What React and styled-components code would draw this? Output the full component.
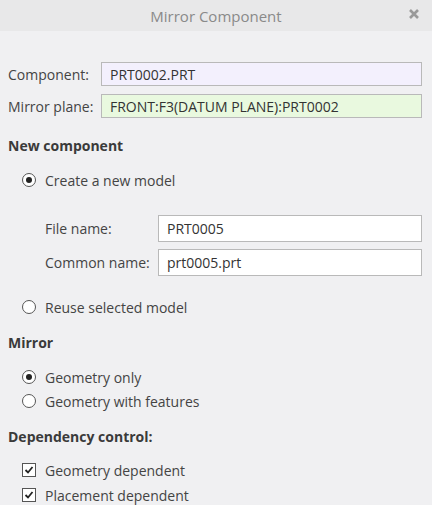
import React from "react";
import styled, { createGlobalStyle } from "styled-components";

const GlobalStyle = createGlobalStyle`
  body {
    margin: 0;
    background: #f0f0f2;
    font-family: "Open Sans", "Noto Sans", sans-serif;
  }
`;

const Dialog = styled.div`
  width: 432px;
  height: 505px;
  background: #f0f0f2;
  overflow: hidden;
  color: #444;
  font-size: 14px;
`;

const TitleBar = styled.div`
  height: 31px;
  background: #e8e8e9;
  display: flex;
  align-items: center;
  justify-content: center;
  position: relative;
  color: #8a8a8a;
  font-size: 15px;
`;

const CloseButton = styled.span`
  position: absolute;
  right: 12px;
  top: 8px;
  width: 12px;
  height: 12px;
  display: flex;
`;

const Body = styled.div`
  padding: 31px 10px 0 8px;
`;

const FieldGrid = styled.div`
  display: grid;
  grid-template-columns: ${(p) => p.labelWidth}px 1fr;
  row-gap: ${(p) => p.gap}px;
  align-items: center;
  margin-left: ${(p) => p.indent || 0}px;
  margin-top: ${(p) => p.top || 0}px;
`;

const Label = styled.div`
  color: #444;
  white-space: nowrap;
`;

const Field = styled.div`
  height: ${(p) => p.height}px;
  box-sizing: border-box;
  border: 1px solid #b9b9b9;
  background: ${(p) => p.bg || "#ffffff"};
  color: #333;
  display: flex;
  align-items: center;
  padding-left: 8px;
`;

const Heading = styled.div`
  font-weight: 700;
  color: #3a3a3a;
  font-size: 14px;
  margin-top: ${(p) => p.top}px;
`;

const OptionRow = styled.label`
  display: flex;
  align-items: center;
  gap: 9px;
  margin-left: 14px;
  height: 24px;
  margin-top: ${(p) => p.top || 0}px;
  color: #444;
`;

const Radio = styled.span`
  width: 14px;
  height: 14px;
  box-sizing: border-box;
  border-radius: 50%;
  border: 1px solid #555;
  background: #fff;
  display: flex;
  align-items: center;
  justify-content: center;
  &::after {
    content: "";
    width: 6px;
    height: 6px;
    border-radius: 50%;
    background: ${(p) => (p.checked ? "#222" : "transparent")};
  }
`;

const Check = styled.span`
  width: 14px;
  height: 14px;
  box-sizing: border-box;
  border: 1px solid #555;
  background: #fff;
  display: flex;
  align-items: center;
  justify-content: center;
`;

const CloseIcon = () => (
  <svg width="12" height="12" viewBox="0 0 12 12">
    <path d="M2 2 L10 10 M10 2 L2 10" stroke="#9a9a9a" strokeWidth="2.6" />
  </svg>
);

const CheckMark = () => (
  <svg width="10" height="10" viewBox="0 0 10 10">
    <path d="M1.5 5 L4 7.5 L8.5 2" fill="none" stroke="#222" strokeWidth="1.8" />
  </svg>
);

const App = () => {
  return (
    <Dialog>
      <GlobalStyle />
      <TitleBar>
        Mirror Component
        <CloseButton>
          <CloseIcon />
        </CloseButton>
      </TitleBar>
      <Body>
        <FieldGrid labelWidth={93} gap={8}>
          <Label>Component:</Label>
          <Field height={24} bg="#f3f0fd">PRT0002.PRT</Field>
          <Label>Mirror plane:</Label>
          <Field height={24} bg="#e9f9df">FRONT:F3(DATUM PLANE):PRT0002</Field>
        </FieldGrid>

        <Heading top={18}>New component</Heading>
        <OptionRow top={13}>
          <Radio checked />
          Create a new model
        </OptionRow>
        <FieldGrid labelWidth={113} gap={7} indent={37} top={23}>
          <Label>File name:</Label>
          <Field height={27}>PRT0005</Field>
          <Label>Common name:</Label>
          <Field height={27}>prt0005.prt</Field>
        </FieldGrid>
        <OptionRow top={19}>
          <Radio />
          Reuse selected model
        </OptionRow>

        <Heading top={14}>Mirror</Heading>
        <OptionRow top={13}>
          <Radio checked />
          Geometry only
        </OptionRow>
        <OptionRow>
          <Radio />
          Geometry with features
        </OptionRow>

        <Heading top={14}>Dependency control:</Heading>
        <OptionRow top={12}>
          <Check>
            <CheckMark />
          </Check>
          Geometry dependent
        </OptionRow>
        <OptionRow top={1}>
          <Check>
            <CheckMark />
          </Check>
          Placement dependent
        </OptionRow>
      </Body>
    </Dialog>
  );
};

export default App;
